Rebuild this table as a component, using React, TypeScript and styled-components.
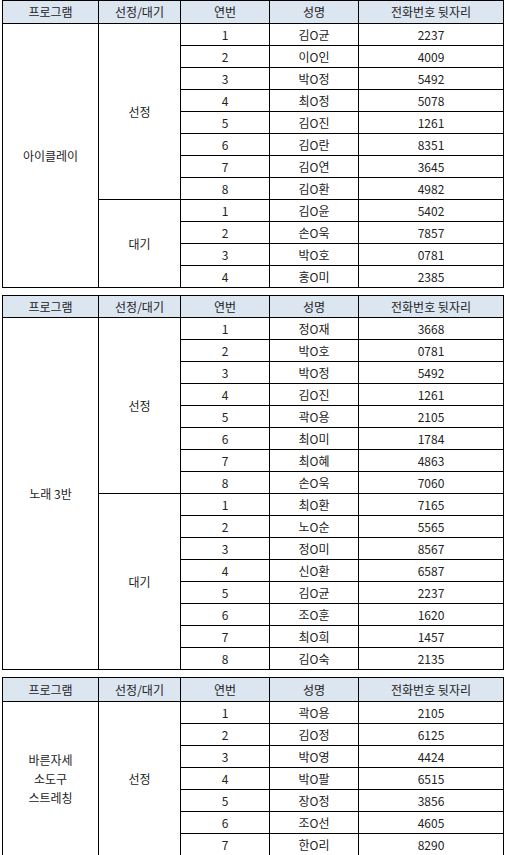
import React from 'react'
import styled, { createGlobalStyle } from 'styled-components'

const GlobalStyle = createGlobalStyle`
  html, body {
    margin: 0;
    padding: 0;
    background: #ffffff;
  }
  body {
    font-family: 'Noto Sans CJK KR', 'Noto Sans', sans-serif;
    color: #222222;
  }
`

const Page = styled.div`
  width: 505px;
  padding: 0 0 0 2px;
  box-sizing: border-box;
  display: flex;
  flex-direction: column;
  gap: 7px;
`

const Table = styled.table`
  width: 501px;
  border-collapse: collapse;
  table-layout: fixed;
  font-size: 12px;
  line-height: 1;
`

const Col = styled.col<{ $w: number }>`
  width: ${(p) => p.$w}px;
`

const HeadCell = styled.th<{ $h: number }>`
  height: ${(p) => p.$h}px;
  padding: 0;
  background: #dce6f1;
  border: 1px solid #000;
  font-weight: 400;
  text-align: center;
  vertical-align: middle;
  box-sizing: border-box;
`

const Cell = styled.td`
  height: 22px;
  padding: 0;
  border: 1px solid #000;
  text-align: center;
  vertical-align: middle;
  box-sizing: border-box;
`

const GroupCell = styled(Cell)`
  line-height: 19px;
`

const NameLine = styled.div`
  display: block;
`

const columns = [96, 82, 89, 89, 145]
const headers = ['프로그램', '선정/대기', '연번', '성명', '전화번호 뒷자리']

type Person = [string, string]
type Group = { label: string; people: Person[] }
type Program = { name: string[]; headHeight: number; groups: Group[] }

const programs: Program[] = [
  {
    name: ['아이클레이'],
    headHeight: 23,
    groups: [
      {
        label: '선정',
        people: [
          ['김O균', '2237'],
          ['이O인', '4009'],
          ['박O정', '5492'],
          ['최O정', '5078'],
          ['김O진', '1261'],
          ['김O란', '8351'],
          ['김O연', '3645'],
          ['김O환', '4982'],
        ],
      },
      {
        label: '대기',
        people: [
          ['김O윤', '5402'],
          ['손O욱', '7857'],
          ['박O호', '0781'],
          ['홍O미', '2385'],
        ],
      },
    ],
  },
  {
    name: ['노래 3반'],
    headHeight: 22,
    groups: [
      {
        label: '선정',
        people: [
          ['정O재', '3668'],
          ['박O호', '0781'],
          ['박O정', '5492'],
          ['김O진', '1261'],
          ['곽O용', '2105'],
          ['최O미', '1784'],
          ['최O혜', '4863'],
          ['손O욱', '7060'],
        ],
      },
      {
        label: '대기',
        people: [
          ['최O환', '7165'],
          ['노O순', '5565'],
          ['정O미', '8567'],
          ['신O환', '6587'],
          ['김O균', '2237'],
          ['조O훈', '1620'],
          ['최O희', '1457'],
          ['김O숙', '2135'],
        ],
      },
    ],
  },
  {
    name: ['바른자세', '소도구', '스트레칭'],
    headHeight: 24,
    groups: [
      {
        label: '선정',
        people: [
          ['곽O용', '2105'],
          ['김O정', '6125'],
          ['박O영', '4424'],
          ['박O팔', '6515'],
          ['장O정', '3856'],
          ['조O선', '4605'],
          ['한O리', '8290'],
        ],
      },
    ],
  },
]

const ProgramTable: React.FC<{ program: Program }> = ({ program }) => {
  const total = program.groups.reduce((n, g) => n + g.people.length, 0)
  return (
    <Table>
      <colgroup>
        {columns.map((w, i) => (
          <Col key={i} $w={w} />
        ))}
      </colgroup>
      <thead>
        <tr>
          {headers.map((t) => (
            <HeadCell key={t} $h={program.headHeight}>
              {t}
            </HeadCell>
          ))}
        </tr>
      </thead>
      <tbody>
        {program.groups.map((g, gi) =>
          g.people.map(([name, phone], i) => (
            <tr key={`${gi}-${i}`}>
              {gi === 0 && i === 0 && (
                <GroupCell rowSpan={total}>
                  {program.name.map((line) => (
                    <NameLine key={line}>{line}</NameLine>
                  ))}
                </GroupCell>
              )}
              {i === 0 && <GroupCell rowSpan={g.people.length}>{g.label}</GroupCell>}
              <Cell>{i + 1}</Cell>
              <Cell>{name}</Cell>
              <Cell>{phone}</Cell>
            </tr>
          ))
        )}
      </tbody>
    </Table>
  )
}

export default function App() {
  return (
    <>
      <GlobalStyle />
      <Page>
        {programs.map((p) => (
          <ProgramTable key={p.name.join()} program={p} />
        ))}
      </Page>
    </>
  )
}
